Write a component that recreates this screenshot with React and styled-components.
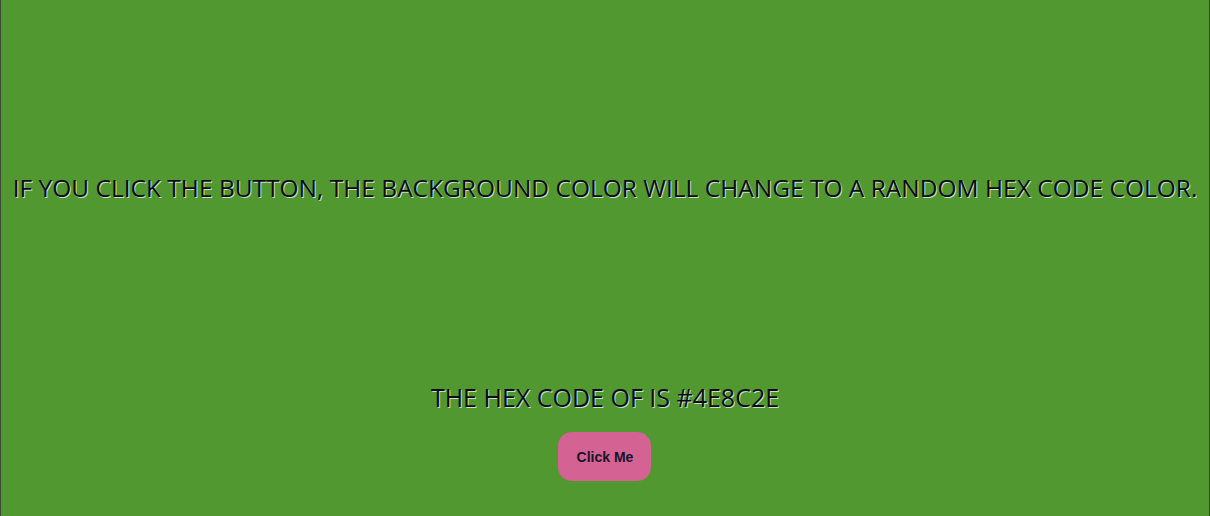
import React, { useState } from 'react';
import styled, { createGlobalStyle } from 'styled-components';

const GlobalStyle = createGlobalStyle`
    html, body {
        margin: 0;
        padding: 0;
    }
    body {
        font-family: "Open Sans", "DejaVu Sans", sans-serif;
    }
`

const randomHex = () => {
    const hex = Math.floor(Math.random() * 0xffffff).toString(16).toUpperCase();
    return '#' + hex.padStart(6, '0');
};

const App = () => {
    const [color, setColor] = useState('#4E8C2E');

    return (
        <React.Fragment>
            <GlobalStyle />
            <Page>
                <Intro>
                    If you click the button, the background color will change to a random hex code color.
                </Intro>
                <Bottom>
                    <HexLabel>The hex code of is {color}</HexLabel>
                    <Button onClick={() => setColor(randomHex())}>Click Me</Button>
                </Bottom>
            </Page>
        </React.Fragment>
    );
};

const Page = styled.div`
    box-sizing: border-box;
    width: 1210px;
    height: 516px;
    background: #519830;
    border-left: 1px solid #3c4a38;
    border-right: 1px solid #3c4a38;
    display: flex;
    flex-direction: column;
    align-items: center;
    padding-top: 173px;
`
const Intro = styled.p`
    margin: 0;
    font-size: 24.5px;
    line-height: 30px;
    text-transform: uppercase;
    color: #0c0c10;
    text-shadow: 1px 1px 0 #c8dcd8;
    white-space: nowrap;
`
const Bottom = styled.div`
    margin-top: 179px;
    display: flex;
    flex-direction: column;
    align-items: center;
    gap: 20px;
`
const HexLabel = styled.h2`
    margin: 0;
    font-size: 25px;
    font-weight: 400;
    line-height: 30px;
    text-transform: uppercase;
    color: #0c0c10;
    text-shadow: 1px 1px 0 #c8dcd8;
`
const Button = styled.button`
    width: 93px;
    height: 49px;
    border: none;
    border-radius: 14px;
    background: #d46292;
    color: #17152a;
    font-family: "Liberation Sans", Arial, sans-serif;
    font-size: 14px;
    font-weight: 700;
    cursor: pointer;
`

export default App;
